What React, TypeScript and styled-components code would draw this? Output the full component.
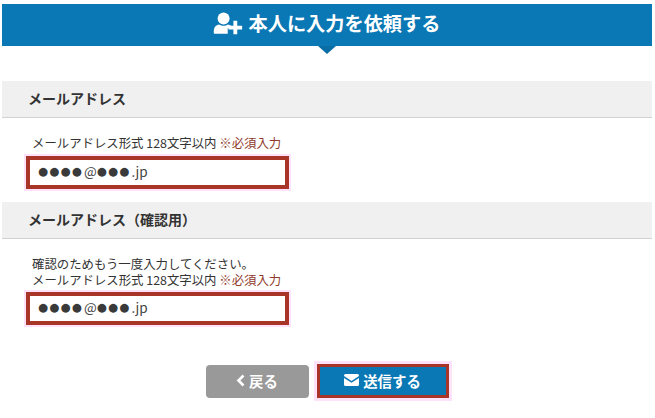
import {createGlobalStyle} from 'styled-components';
import styled from 'styled-components';

const GlobalStyle = createGlobalStyle`
  html, body {
    margin: 0;
    padding: 0;
    background: #fff;
  }
  body {
    font-family: "Noto Sans CJK JP", "Noto Sans", sans-serif;
    color: #333;
  }
`;

const Page = styled.div`
  width: 655px;
  height: 418px;
  box-sizing: border-box;
  padding: 4px 3px 0 2px;
  overflow: hidden;
`;

const Header = styled.h1`
  position: relative;
  display: flex;
  align-items: center;
  justify-content: center;
  gap: 5px;
  height: 42px;
  margin: 0 0 35px;
  padding: 0 1px 2px 0;
  box-sizing: border-box;
  background: #0a78b4;
  color: #fff;
  font-size: 19.2px;
  font-weight: 700;
  line-height: 1;

  &::after {
    content: '';
    position: absolute;
    left: 316px;
    top: 100%;
    border-style: solid;
    border-width: 8px 9px 0;
    border-color: #0a6ea6 transparent transparent;
  }
`;

const SectionTitle = styled.h2`
  display: flex;
  align-items: center;
  height: 37px;
  margin: 0;
  padding: 0 0 3px 26px;
  box-sizing: border-box;
  background: #f0f0f0;
  border-bottom: 1px solid #d2d2d2;
  font-size: 14px;
  font-weight: 700;
  color: #333;
`;

const Field = styled.div<{$top: number; $bottom: number}>`
  padding: ${p => p.$top}px 0 ${p => p.$bottom}px 30px;
`;

const Hint = styled.p<{$gap: number}>`
  margin: 0 0 ${p => p.$gap}px;
  font-size: 12.4px;
  line-height: 16px;
  color: #333;
`;

const Required = styled.span`
  color: #8f3a2c;
`;

const EmailBox = styled.div`
  display: flex;
  align-items: center;
  width: 263px;
  height: 33px;
  margin-left: -6px;
  padding: 0 0 3px 8px;
  box-sizing: border-box;
  border: 4px solid #a93529;
  box-shadow: 0 0 0 2px #fde2fa;
  background: #fff;
  font-size: 13.5px;
  color: #444;
`;

const Dots = styled.span`
  margin-right: 1px;
  font-family: "DejaVu Sans", sans-serif;
  font-size: 11.5px;
  letter-spacing: 1.2px;
  color: #3a3a3a;
`;

const Actions = styled.div`
  display: flex;
  align-items: center;
  justify-content: center;
  gap: 8px;
  margin-top: 39px;
`;

const ButtonBase = styled.button`
  display: flex;
  align-items: center;
  justify-content: center;
  gap: 4px;
  padding: 0 0 2px;
  box-sizing: border-box;
  color: #fff;
  font-family: inherit;
  font-size: 14.4px;
  font-weight: 700;
`;

const BackButton = styled(ButtonBase)`
  width: 103px;
  height: 33px;
  border: none;
  border-radius: 4px;
  background: #999;
`;

const SendButton = styled(ButtonBase)`
  width: 132px;
  height: 34px;
  border: 3px solid #a93529;
  box-shadow: 0 0 0 3px #fde2fa;
  background: #0a78b4;
`;

function AddUserIcon() {
  return (
    <svg width="31" height="24" viewBox="0 0 27 22" fill="#fff" aria-hidden="true">
      <circle cx="9" cy="6" r="5.5" />
      <path d="M1 20c-1 0-1-1-1-2 0-4 2-6 5-6.500 2 1.500 6 1.500 8 0 1 .2 2 .6 2.800 1.200V15h-3v5z" />
      <path d="M18 8h3.500v4.500H26V16h-4.500v4.500H18V16h-4.500v-3.500H18z" />
    </svg>
  );
}

function ChevronIcon() {
  return (
    <svg width="9" height="13" viewBox="0 0 9 13" aria-hidden="true">
      <path d="M7.500 1.500 2.500 6.500l5 5" fill="none" stroke="#fff" strokeWidth="2.600" />
    </svg>
  );
}

function MailIcon() {
  return (
    <svg width="15" height="12" viewBox="0 0 15 12" fill="#fff" aria-hidden="true">
      <path d="M1.500 0h12A1.500 1.500 0 0 1 15 1.500v.6L7.500 7 0 2.100v-.6A1.500 1.500 0 0 1 1.500 0z" />
      <path d="M0 4l7.500 4.800L15 4v6.500a1.500 1.500 0 0 1-1.500 1.500h-12A1.500 1.500 0 0 1 0 10.500z" />
    </svg>
  );
}

function MaskedEmail() {
  return (
    <EmailBox>
      <Dots>●●●●</Dots>@<Dots>●●●</Dots>.jp
    </EmailBox>
  );
}

export default function App() {
  return (
    <>
      <GlobalStyle />
      <Page>
        <Header>
          <AddUserIcon />
          本人に入力を依頼する
        </Header>

        <SectionTitle>メールアドレス</SectionTitle>
        <Field $top={17} $bottom={13}>
          <Hint $gap={5}>
            メールアドレス形式 128文字以内 <Required>※必須入力</Required>
          </Hint>
          <MaskedEmail />
        </Field>

        <SectionTitle>メールアドレス（確認用）</SectionTitle>
        <Field $top={17} $bottom={0}>
          <Hint $gap={4}>
            確認のためもう一度入力してください。
            <br />
            メールアドレス形式 128文字以内 <Required>※必須入力</Required>
          </Hint>
          <MaskedEmail />
        </Field>

        <Actions>
          <BackButton>
            <ChevronIcon />
            戻る
          </BackButton>
          <SendButton>
            <MailIcon />
            送信する
          </SendButton>
        </Actions>
      </Page>
    </>
  );
}
